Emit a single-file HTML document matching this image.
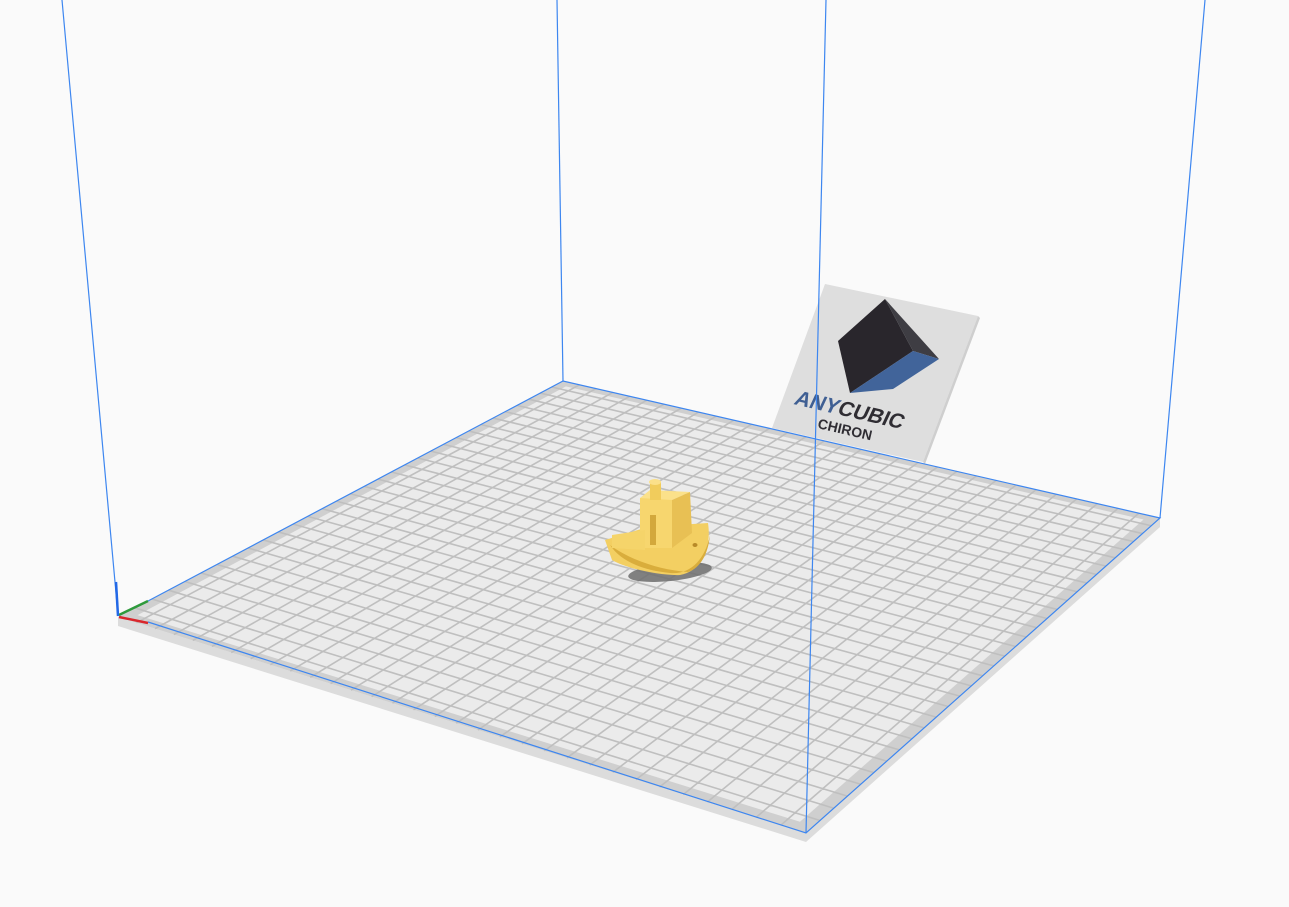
<!DOCTYPE html>
<html><head><meta charset="utf-8"><style>
html,body{margin:0;padding:0;background:#fafafa;}
svg{display:block}
</style></head><body>
<svg id="s" width="1289" height="907" viewBox="0 0 1289 907" xmlns="http://www.w3.org/2000/svg">
<rect width="1289" height="907" fill="#fafafa"/>
<!-- plate thickness -->
<polygon points="118,617 806,833 1160,518 1160,527 806,842 118,626" fill="#dcdcdc"/>
<polygon points="118,617 806,833 1160,518 563,381" fill="#cfcfcf"/>
<g id="inner"></g>
<g id="grid" stroke="#bfbfbf" stroke-width="1.6" fill="none"></g>
<!-- logo plate -->
<polygon points="825,284 978,316 923,462 772,428" fill="#dedede"/>
<polygon points="978,316 980,318 925,464 923,462" fill="#cfcfcf"/>
<polygon points="885,299 838,341 850,393 913,351" fill="#29262c"/>
<polygon points="885,299 939,359 913,351" fill="#3e3d43"/>
<polygon points="850,393 913,351 939,359 893,389" fill="#41649a"/>
<text x="0" y="0" transform="translate(793,404) rotate(13) skewX(-12)" font-family="Liberation Sans, sans-serif" font-weight="bold" font-size="21" fill="#3f5f93">ANY<tspan fill="#2f2d33">CUBIC</tspan></text>
<text x="0" y="0" transform="translate(817,428) rotate(13)" font-family="Liberation Sans, sans-serif" font-weight="bold" font-size="14" fill="#2f2d33">CHIRON</text>
<!-- blue frame -->
<g stroke="#3d86f0" stroke-width="1.2" fill="none">
<line x1="118" y1="615" x2="62" y2="0"/>
<line x1="563" y1="381" x2="557" y2="0"/>
<line x1="806" y1="833" x2="826" y2="0"/>
<line x1="1160" y1="518" x2="1205" y2="0"/>
<polyline points="148,622 806,833 1160,518 563,381 148,601"/>
</g>
<!-- axes -->
<line x1="119" y1="617" x2="148" y2="623" stroke="#d9262c" stroke-width="2.5"/>
<line x1="119" y1="615" x2="148" y2="601" stroke="#2e9a3c" stroke-width="2.5"/>
<line x1="118" y1="616" x2="116" y2="582" stroke="#2268e6" stroke-width="2.5"/>
<!-- boat -->
<ellipse cx="670" cy="572" rx="42" ry="9" fill="#6d6d6d" opacity="0.85" transform="rotate(-6 670 572)"/>
<path d="M605,540 L648,527 L708,523 C712,550 700,572 680,575 C660,576 625,568 612,560 Z" fill="#f3cf62"/>
<path d="M610,545 C630,560 660,570 688,572 C700,568 708,555 710,535 C705,560 690,575 670,573 C640,570 620,560 610,545Z" fill="#d9ad3c"/>
<rect x="640" y="498" width="32" height="50" fill="#f7d66e"/>
<polygon points="640,498 650,490 690,492 672,500" fill="#fbe18a"/>
<polygon points="672,500 690,492 692,533 672,548" fill="#e8c054"/>
<rect x="650" y="482" width="11" height="18" fill="#f1cc5c"/>
<ellipse cx="655" cy="482" rx="6" ry="3" fill="#fbe08a"/>
<rect x="650" y="515" width="6" height="30" fill="#d3a83c"/>
<path d="M612,535 L645,530 L645,550 L612,548Z" fill="#f5d46a"/>
<ellipse cx="695" cy="545" rx="2.5" ry="2" fill="#b88a28"/>
</svg>
<script>
(function(){
function homog(p){
 var x0=p[0][0],y0=p[0][1],x1=p[1][0],y1=p[1][1],x2=p[2][0],y2=p[2][1],x3=p[3][0],y3=p[3][1];
 var dx1=x1-x2,dx2=x3-x2,dy1=y1-y2,dy2=y3-y2,sx=x0-x1+x2-x3,sy=y0-y1+y2-y3;
 var d=dx1*dy2-dx2*dy1;
 var g=(sx*dy2-dx2*sy)/d,h=(dx1*sy-sx*dy1)/d;
 var a=x1-x0+g*x1,b=x3-x0+h*x3,c=x0,dd=y1-y0+g*y1,e=y3-y0+h*y3,f=y0;
 return function(u,v){var w=g*u+h*v+1;return [(a*u+b*v+c)/w,(dd*u+e*v+f)/w];};
}
var H=homog([[118,617],[806,833],[1160,518],[563,381]]);
var N=32,m=0.55/N,ns="http://www.w3.org/2000/svg";
var q=[H(m,m),H(1-m,m),H(1-m,1-m),H(m,1-m)];
var poly=document.createElementNS(ns,"polygon");
poly.setAttribute("points",q.map(function(p){return p.join(",")}).join(" "));
poly.setAttribute("fill","#ebebeb");
document.getElementById("inner").appendChild(poly);
var g=document.getElementById("grid"),dstr="";
for(var i=1;i<N;i++){
 var t=i/N,a=H(t,0),b=H(t,1),c=H(0,t),d=H(1,t);
 dstr+="M"+a[0]+","+a[1]+"L"+b[0]+","+b[1]+"M"+c[0]+","+c[1]+"L"+d[0]+","+d[1];
}
var pth=document.createElementNS(ns,"path");pth.setAttribute("d",dstr);g.appendChild(pth);
})();
</script>
</body></html>
